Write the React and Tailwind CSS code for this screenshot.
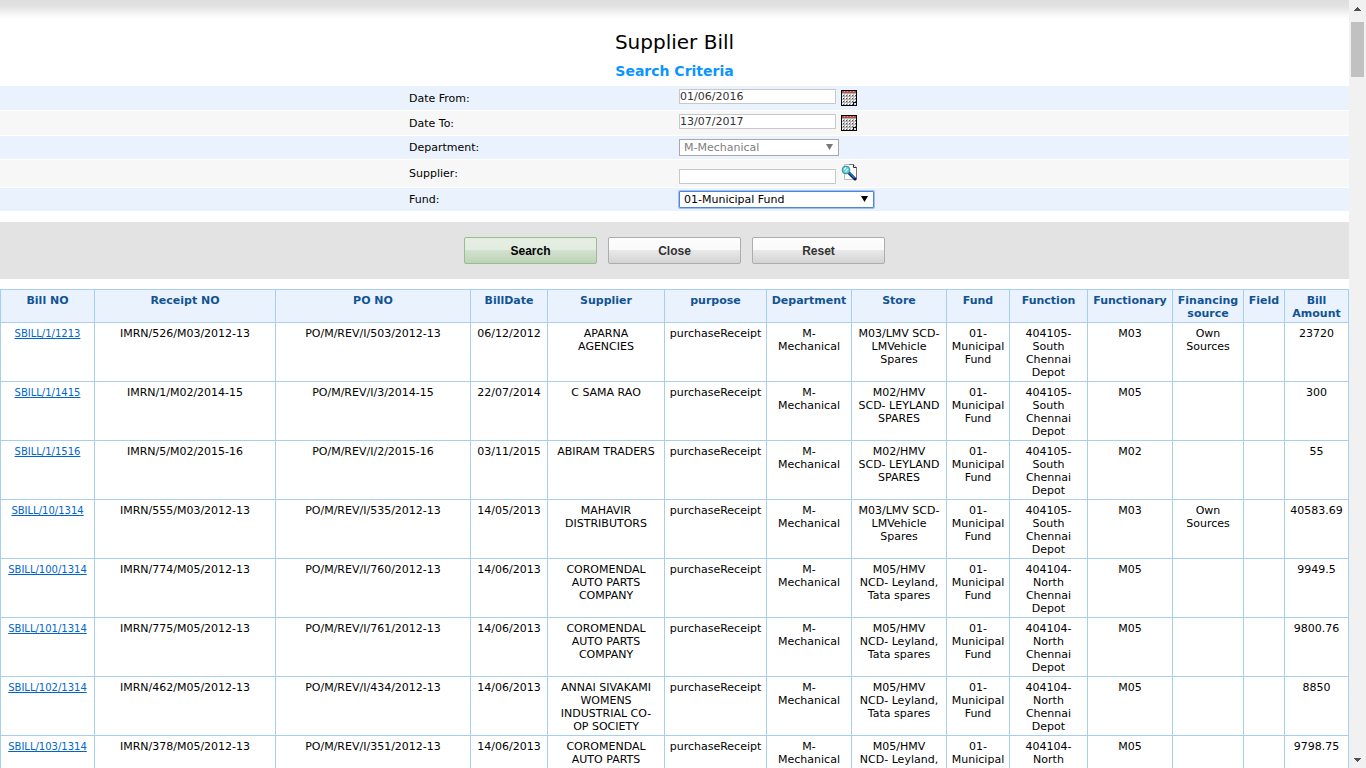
import React from "react";

const columns = [
  ["Bill NO", 94],
  ["Receipt NO", 181],
  ["PO NO", 195],
  ["BillDate", 77],
  ["Supplier", 117],
  ["purpose", 102],
  ["Department", 85],
  ["Store", 95],
  ["Fund", 63],
  ["Function", 78],
  ["Functionary", 85],
  ["Financing\nsource", 71],
  ["Field", 41],
  ["Bill\nAmount", 64],
];

const LMV = "M03/LMV SCD-\nLMVehicle\nSpares";
const HMV = "M02/HMV\nSCD- LEYLAND\nSPARES";
const NCD = "M05/HMV\nNCD- Leyland,\nTata spares";
const SOUTH = "404105-\nSouth\nChennai\nDepot";
const NORTH = "404104-\nNorth\nChennai\nDepot";
const OWN = "Own\nSources";
const COROMENDAL = "COROMENDAL\nAUTO PARTS\nCOMPANY";

const bills = [
  ["SBILL/1/1213", "IMRN/526/M03/2012-13", "PO/M/REV/I/503/2012-13", "06/12/2012", "APARNA\nAGENCIES", LMV, SOUTH, "M03", OWN, "23720"],
  ["SBILL/1/1415", "IMRN/1/M02/2014-15", "PO/M/REV/I/3/2014-15", "22/07/2014", "C SAMA RAO", HMV, SOUTH, "M05", "", "300"],
  ["SBILL/1/1516", "IMRN/5/M02/2015-16", "PO/M/REV/I/2/2015-16", "03/11/2015", "ABIRAM TRADERS", HMV, SOUTH, "M02", "", "55"],
  ["SBILL/10/1314", "IMRN/555/M03/2012-13", "PO/M/REV/I/535/2012-13", "14/05/2013", "MAHAVIR\nDISTRIBUTORS", LMV, SOUTH, "M03", OWN, "40583.69"],
  ["SBILL/100/1314", "IMRN/774/M05/2012-13", "PO/M/REV/I/760/2012-13", "14/06/2013", COROMENDAL, NCD, NORTH, "M05", "", "9949.5"],
  ["SBILL/101/1314", "IMRN/775/M05/2012-13", "PO/M/REV/I/761/2012-13", "14/06/2013", COROMENDAL, NCD, NORTH, "M05", "", "9800.76"],
  ["SBILL/102/1314", "IMRN/462/M05/2012-13", "PO/M/REV/I/434/2012-13", "14/06/2013", "ANNAI SIVAKAMI\nWOMENS\nINDUSTRIAL CO-\nOP SOCIETY", NCD, NORTH, "M05", "", "8850"],
  ["SBILL/103/1314", "IMRN/378/M05/2012-13", "PO/M/REV/I/351/2012-13", "14/06/2013", COROMENDAL, NCD, NORTH, "M05", "", "9798.75"],
];

function CalendarIcon() {
  const xs = [1, 4, 7, 10, 13];
  const ys = [4, 7, 10, 13];
  return (
    <svg width="16" height="16" viewBox="0 0 16 16" shapeRendering="crispEdges" aria-hidden="true">
      <rect width="16" height="16" fill="#000" />
      <rect x="1" y="1" width="14" height="14" fill="#b4b0b0" />
      <rect x="1" y="1" width="14" height="2" fill="#b5524f" />
      <path d="M3 1h1v1h-1zM6 1h1v1h-1zM9 1h1v1h-1zM12 1h1v1h-1z" fill="#dd9c98" />
      {ys.map((y) => xs.map((x) => (
        <g key={`${x}-${y}`}>
          <rect x={x} y={y} width="2" height="2" fill="#f2f2f2" />
          <rect x={x + 1} y={y + 1} width="1" height="1" fill="#555" />
        </g>
      )))}
      <path d="M0 15h16v1H0zM15 0h1v16h-1z" fill="#000" />
      <path d="M12 12h4v4h-4z" fill="#111" />
      <path d="M13 13h2v2h-2z" fill="#ddd" />
    </svg>
  );
}

function LookupIcon() {
  return (
    <svg width="17" height="18" viewBox="0 0 17 18" aria-hidden="true">
      <path d="M3.5 1.5H12.500l3 3v12H3.500z" fill="#fff" stroke="#bdbdbd" strokeWidth="1" />
      <path d="M8 1.500h4.500l3 3V16" fill="none" stroke="#777" strokeWidth="1" />
      <path d="M12.500 1.500v3h3" fill="#eee" stroke="#333" strokeWidth="1" />
      <path d="M8 10l6 6" stroke="#10194a" strokeWidth="3" strokeLinecap="round" />
      <path d="M8.500 10l5 5" stroke="#1674e8" strokeWidth="1.500" />
      <circle cx="5" cy="7" r="3.900" fill="#62cdd3" stroke="#3c8f98" />
      <path d="M3 6.500L5 4.500M4.500 8.500L7 6" stroke="#d8ffff" strokeWidth="1.200" />
    </svg>
  );
}

function Row({ id, label, className, children }) {
  return (
    <div className={`grid grid-cols-[409fr_270fr_670fr] items-center ${className}`}>
      <label htmlFor={id} className="col-start-2">{label}</label>
      <div className="flex items-start gap-[5px]">{children}</div>
    </div>
  );
}

function Arrow() {
  return (
    <svg className="pointer-events-none absolute right-[6px] top-[5px]" width="7" height="6" viewBox="0 0 7 6" aria-hidden="true">
      <path d="M0 0h7L3.500 6z" fill="currentColor" />
    </svg>
  );
}

const inputClass = "h-[15px] w-[157px] border border-[#c8c8c8] bg-white p-0 text-[#333] outline-none";
const buttonClass =
  "h-[27px] w-[133px] rounded-[2px] border border-[#adadad] bg-[linear-gradient(#fdfdfd_0%,#fafafa_47%,#e9e9e9_50%,#d3d3d3_100%)] pt-px text-[#333]";

export default function App() {
  return (
    <div className="flex h-screen overflow-hidden bg-white font-['DejaVu_Sans',Verdana,sans-serif] text-[11px] leading-[13px] text-black">
      <main className="min-w-0 flex-1 overflow-hidden">
        <div className="h-[18px] bg-[linear-gradient(#dedede_0%,#e2e2e2_35%,#ffffff_100%)]" />
        <header className="flex flex-col items-center pt-[11px]">
          <h1 className="text-[20px] leading-[26px]">Supplier Bill</h1>
          <h2 className="pt-[5px] pb-1 text-[14px] leading-[22px] font-bold text-[#0a95ff]">Search Criteria</h2>
        </header>

        <form onSubmit={(e) => e.preventDefault()}>
          <div className="flex flex-col gap-px">
            <Row id="from" label="Date From:" className="h-[24px] bg-[#eaf3fd]">
              <input id="from" type="text" defaultValue="01/06/2016" className={inputClass} />
              <button type="button" aria-label="Pick start date" className="py-px"><CalendarIcon /></button>
            </Row>
            <Row id="to" label="Date To:" className="h-[24px] bg-[#f7f7f7]">
              <input id="to" type="text" defaultValue="13/07/2017" className={inputClass} />
              <button type="button" aria-label="Pick end date" className="py-px"><CalendarIcon /></button>
            </Row>
            <Row id="department" label="Department:" className="h-[23px] bg-[#eaf3fd]">
              <div className="relative text-[#777]">
                <select id="department" disabled className="block h-[17px] w-[160px] appearance-none border border-[#a9a9a9] bg-white pl-1 text-[#808080] opacity-100">
                  <option>M-Mechanical</option>
                </select>
                <Arrow />
              </div>
            </Row>
            <Row id="supplier" label="Supplier:" className="h-[27px] bg-[#f7f7f7]">
              <input id="supplier" type="text" className={`${inputClass} self-end`} />
              <button type="button" aria-label="Find supplier" className="pb-[3px]"><LookupIcon /></button>
            </Row>
            <Row id="fund" label="Fund:" className="h-[23px] bg-[#eaf3fd]">
              <div className="relative">
                <select id="fund" className="block h-[17px] w-[195px] appearance-none rounded-[1px] border border-[#4f86dd] bg-white pl-1 ring-1 ring-[#9fc0f2] outline-none">
                  <option>01-Municipal Fund</option>
                </select>
                <Arrow />
              </div>
            </Row>
          </div>

          <div className="mt-[11px] flex justify-center gap-[11px] bg-[#e3e3e3] py-[15px] font-['Liberation_Sans',Arial,sans-serif] text-[12px] font-bold">
            <button type="submit" className="h-[27px] w-[133px] rounded-[2px] border border-[#98bd8e] bg-[linear-gradient(#e6eee2_0%,#e3ece0_47%,#d3e1ce_50%,#bcd3b6_100%)] pt-px text-black">
              Search
            </button>
            <button type="button" className={buttonClass}>Close</button>
            <button type="reset" className={buttonClass}>Reset</button>
          </div>
        </form>

        <table className="mt-[10px] w-full table-fixed border-collapse text-center">
          <colgroup>
            {columns.map(([name, width]) => <col key={name} style={{ width }} />)}
          </colgroup>
          <thead>
            <tr className="bg-[#eaf3fd] text-[#125394]">
              {columns.map(([name]) => (
                <th key={name} scope="col" className="border border-[#a8cff0] px-0 pt-1 pb-[2px] align-top font-bold whitespace-pre">{name}</th>
              ))}
            </tr>
          </thead>
          <tbody>
            {bills.map(([no, receipt, po, date, supplier, store, fn, functionary, source, amount]) => (
              <tr key={no}>
                {[
                  <a href="#bill" className="text-[10px] text-[#0066cc] underline">{no}</a>,
                  receipt, po, date, supplier, "purchaseReceipt", "M-\nMechanical", store,
                  "01-\nMunicipal\nFund", fn, functionary, source, "", amount,
                ].map((value, i) => (
                  <td key={columns[i][0]} className="border border-[#a8cff0] px-0 pt-1 pb-[2px] align-top whitespace-pre">{value}</td>
                ))}
              </tr>
            ))}
          </tbody>
        </table>
      </main>

      <div className="flex w-[17px] shrink-0 flex-col items-center bg-[#f1f1f1] pt-[7px] pb-[6px] text-[#505050]" aria-hidden="true">
        <svg width="7" height="4" viewBox="0 0 7 4" shapeRendering="crispEdges"><path d="M3 0h1v1h1v1h1v1h1v1H0V3h1V2h1V1h1z" fill="currentColor" /></svg>
        <div className="mt-[11px] h-[55px] w-[13px] bg-[#c1c1c1]" />
        <svg className="mt-auto" width="7" height="4" viewBox="0 0 7 4" shapeRendering="crispEdges"><path d="M0 0h7v1H6v1H5v1H4v1H3V3H2V2H1V1H0z" fill="currentColor" /></svg>
      </div>
    </div>
  );
}
